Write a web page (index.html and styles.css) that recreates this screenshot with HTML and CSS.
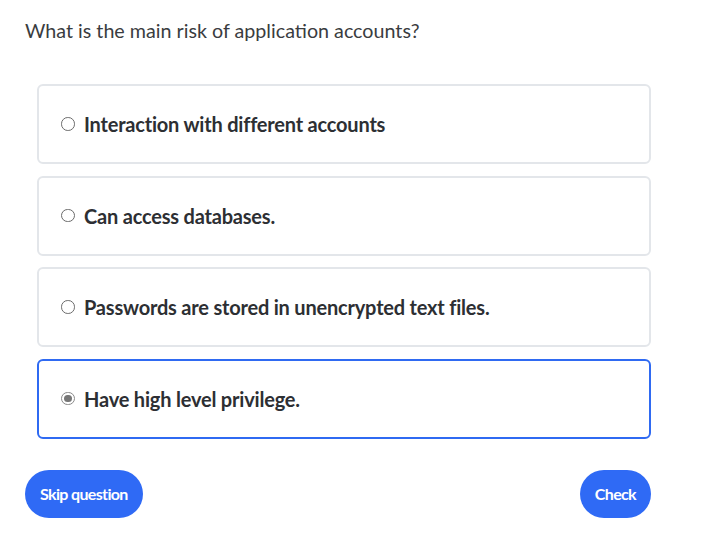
FILE: index.html
```html
<!DOCTYPE html>
<html>
<head>
<meta charset="utf-8">
<link rel="stylesheet" href="styles.css">
</head>
<body>
<div class="quiz">
  <p class="question">What is the main risk of application accounts?</p>
  <div class="options">
    <label class="option"><span class="radio"></span><span class="label">Interaction with different accounts</span></label>
    <label class="option"><span class="radio"></span><span class="label">Can access databases.</span></label>
    <label class="option"><span class="radio"></span><span class="label">Passwords are stored in unencrypted text files.</span></label>
    <label class="option selected"><span class="radio checked"></span><span class="label">Have high level privilege.</span></label>
  </div>
  <div class="actions">
    <button class="btn">Skip question</button>
    <button class="btn">Check</button>
  </div>
</div>
</body>
</html>
```
FILE: styles.css
```css
html, body {
  margin: 0;
  padding: 0;
  background: #ffffff;
}
body {
  font-family: Lato, "Liberation Sans", sans-serif;
  color: #2d2f33;
}
.quiz {
  width: 626px;
  padding: 18px 0 0 25px;
}
.question {
  margin: 0;
  font-size: 19.7px;
  line-height: 26px;
  color: #3a3c40;
}
.options {
  display: flex;
  flex-direction: column;
  gap: 11.5px;
  margin: 40px 0 0 12px;
}
.option {
  display: flex;
  align-items: center;
  height: 76px;
  padding: 0 0 0 22px;
  border: 2px solid #e3e6ea;
  border-radius: 6px;
}
.option.selected {
  border-color: #2f6af2;
}
.radio {
  width: 11.5px;
  height: 11.5px;
  border: 1.2px solid #6a6a6a;
  border-radius: 50%;
  margin-right: 9.5px;
  box-sizing: content-box;
  position: relative;
  flex: none;
}
.radio.checked {
  border-color: #8a8a8a;
}
.radio.checked::after {
  content: "";
  position: absolute;
  left: 2px;
  top: 2px;
  width: 7.5px;
  height: 7.5px;
  border-radius: 50%;
  background: #777777;
}
.label {
  font-size: 20px;
  font-weight: 700;
  letter-spacing: -0.2px;
  color: #2d2f33;
}
.actions {
  display: flex;
  justify-content: space-between;
  margin-top: 31px;
}
.btn {
  height: 48px;
  padding: 0 15px;
  border: none;
  border-radius: 24px;
  background: #2f6af5;
  color: #ffffff;
  font-family: Lato, "Liberation Sans", sans-serif;
  font-weight: 700;
  font-size: 16px;
  letter-spacing: -0.65px;
}
```
